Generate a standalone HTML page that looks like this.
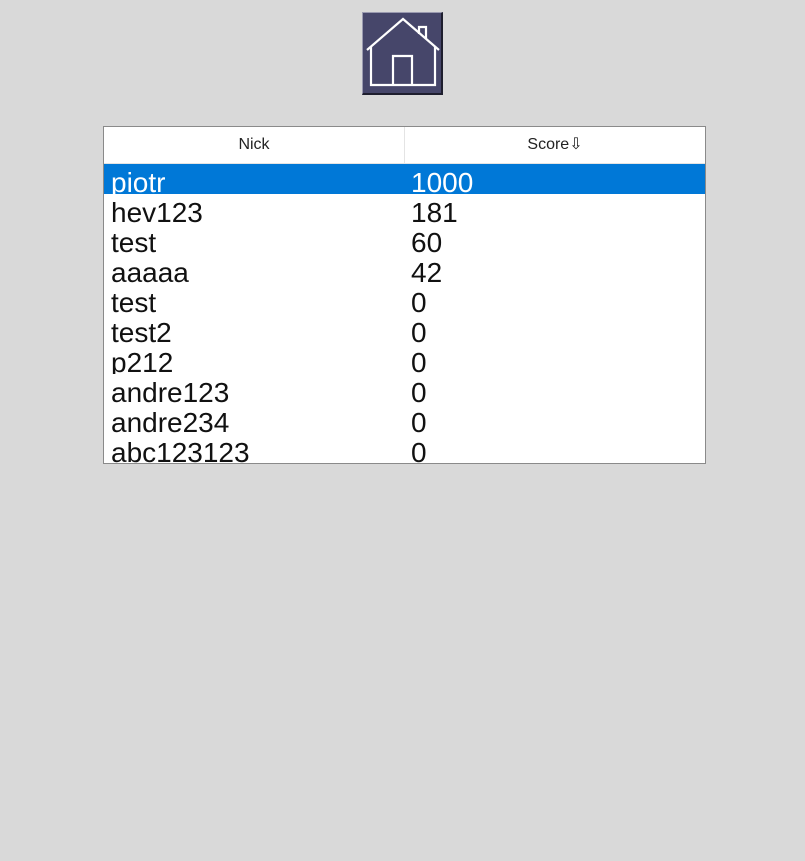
<!DOCTYPE html>
<html><head><style>
body{margin:0;width:805px;height:861px;background:#d9d9d9;position:relative;overflow:hidden;font-family:"Liberation Sans",sans-serif}
.btn{position:absolute;left:362px;top:12px;width:81px;height:83px;background:#46466a;box-sizing:border-box;border-top:1px solid #9a9ab0;border-left:1px solid #9a9ab0;border-right:2px solid #1e1e2e;border-bottom:2px solid #1e1e2e}
.tbl{position:absolute;left:103px;top:126px;width:603px;height:338px;box-sizing:border-box;border:1px solid #8a8a8a;background:#fff;overflow:hidden}
.hdr{height:36px;border-bottom:1px solid #e4e4e4;display:flex;font-size:16px;color:#222}
.hdr div{flex:0 0 300px;text-align:center;line-height:36px}
.hdr div:first-child{border-right:1px solid #e4e4e4}
.row{height:30px;display:flex;overflow:hidden;font-size:28px;letter-spacing:0;color:#111}
.row div{padding-top:4px;line-height:30px;height:26px}
.row .n{width:300px;padding-left:7px}
.sel{background:#0078d7;color:#fff}
</style></head><body>
<div class="btn"><svg width="81" height="83" viewBox="362 12 81 83" style="position:absolute;left:-1px;top:-1px">
<g fill="none" stroke="#fff" stroke-width="2.2">
<path d="M367 50 L403 19 L439 50"/>
<path d="M371 47 V85 H435 V47"/>
<path d="M393 85 V56 H412 V85"/>
<path d="M419 34 V27 H426 V39"/>
</g></svg></div>
<div class="tbl">
<div class="hdr"><div>Nick</div><div>Score⇩</div></div>
<div class="row sel"><div class="n">piotr</div><div class="s">1000</div></div>
<div class="row"><div class="n">hev123</div><div class="s">181</div></div>
<div class="row"><div class="n">test</div><div class="s">60</div></div>
<div class="row"><div class="n">aaaaa</div><div class="s">42</div></div>
<div class="row"><div class="n">test</div><div class="s">0</div></div>
<div class="row"><div class="n">test2</div><div class="s">0</div></div>
<div class="row"><div class="n">p212</div><div class="s">0</div></div>
<div class="row"><div class="n">andre123</div><div class="s">0</div></div>
<div class="row"><div class="n">andre234</div><div class="s">0</div></div>
<div class="row"><div class="n">abc123123</div><div class="s">0</div></div>
</div>
</body></html>
